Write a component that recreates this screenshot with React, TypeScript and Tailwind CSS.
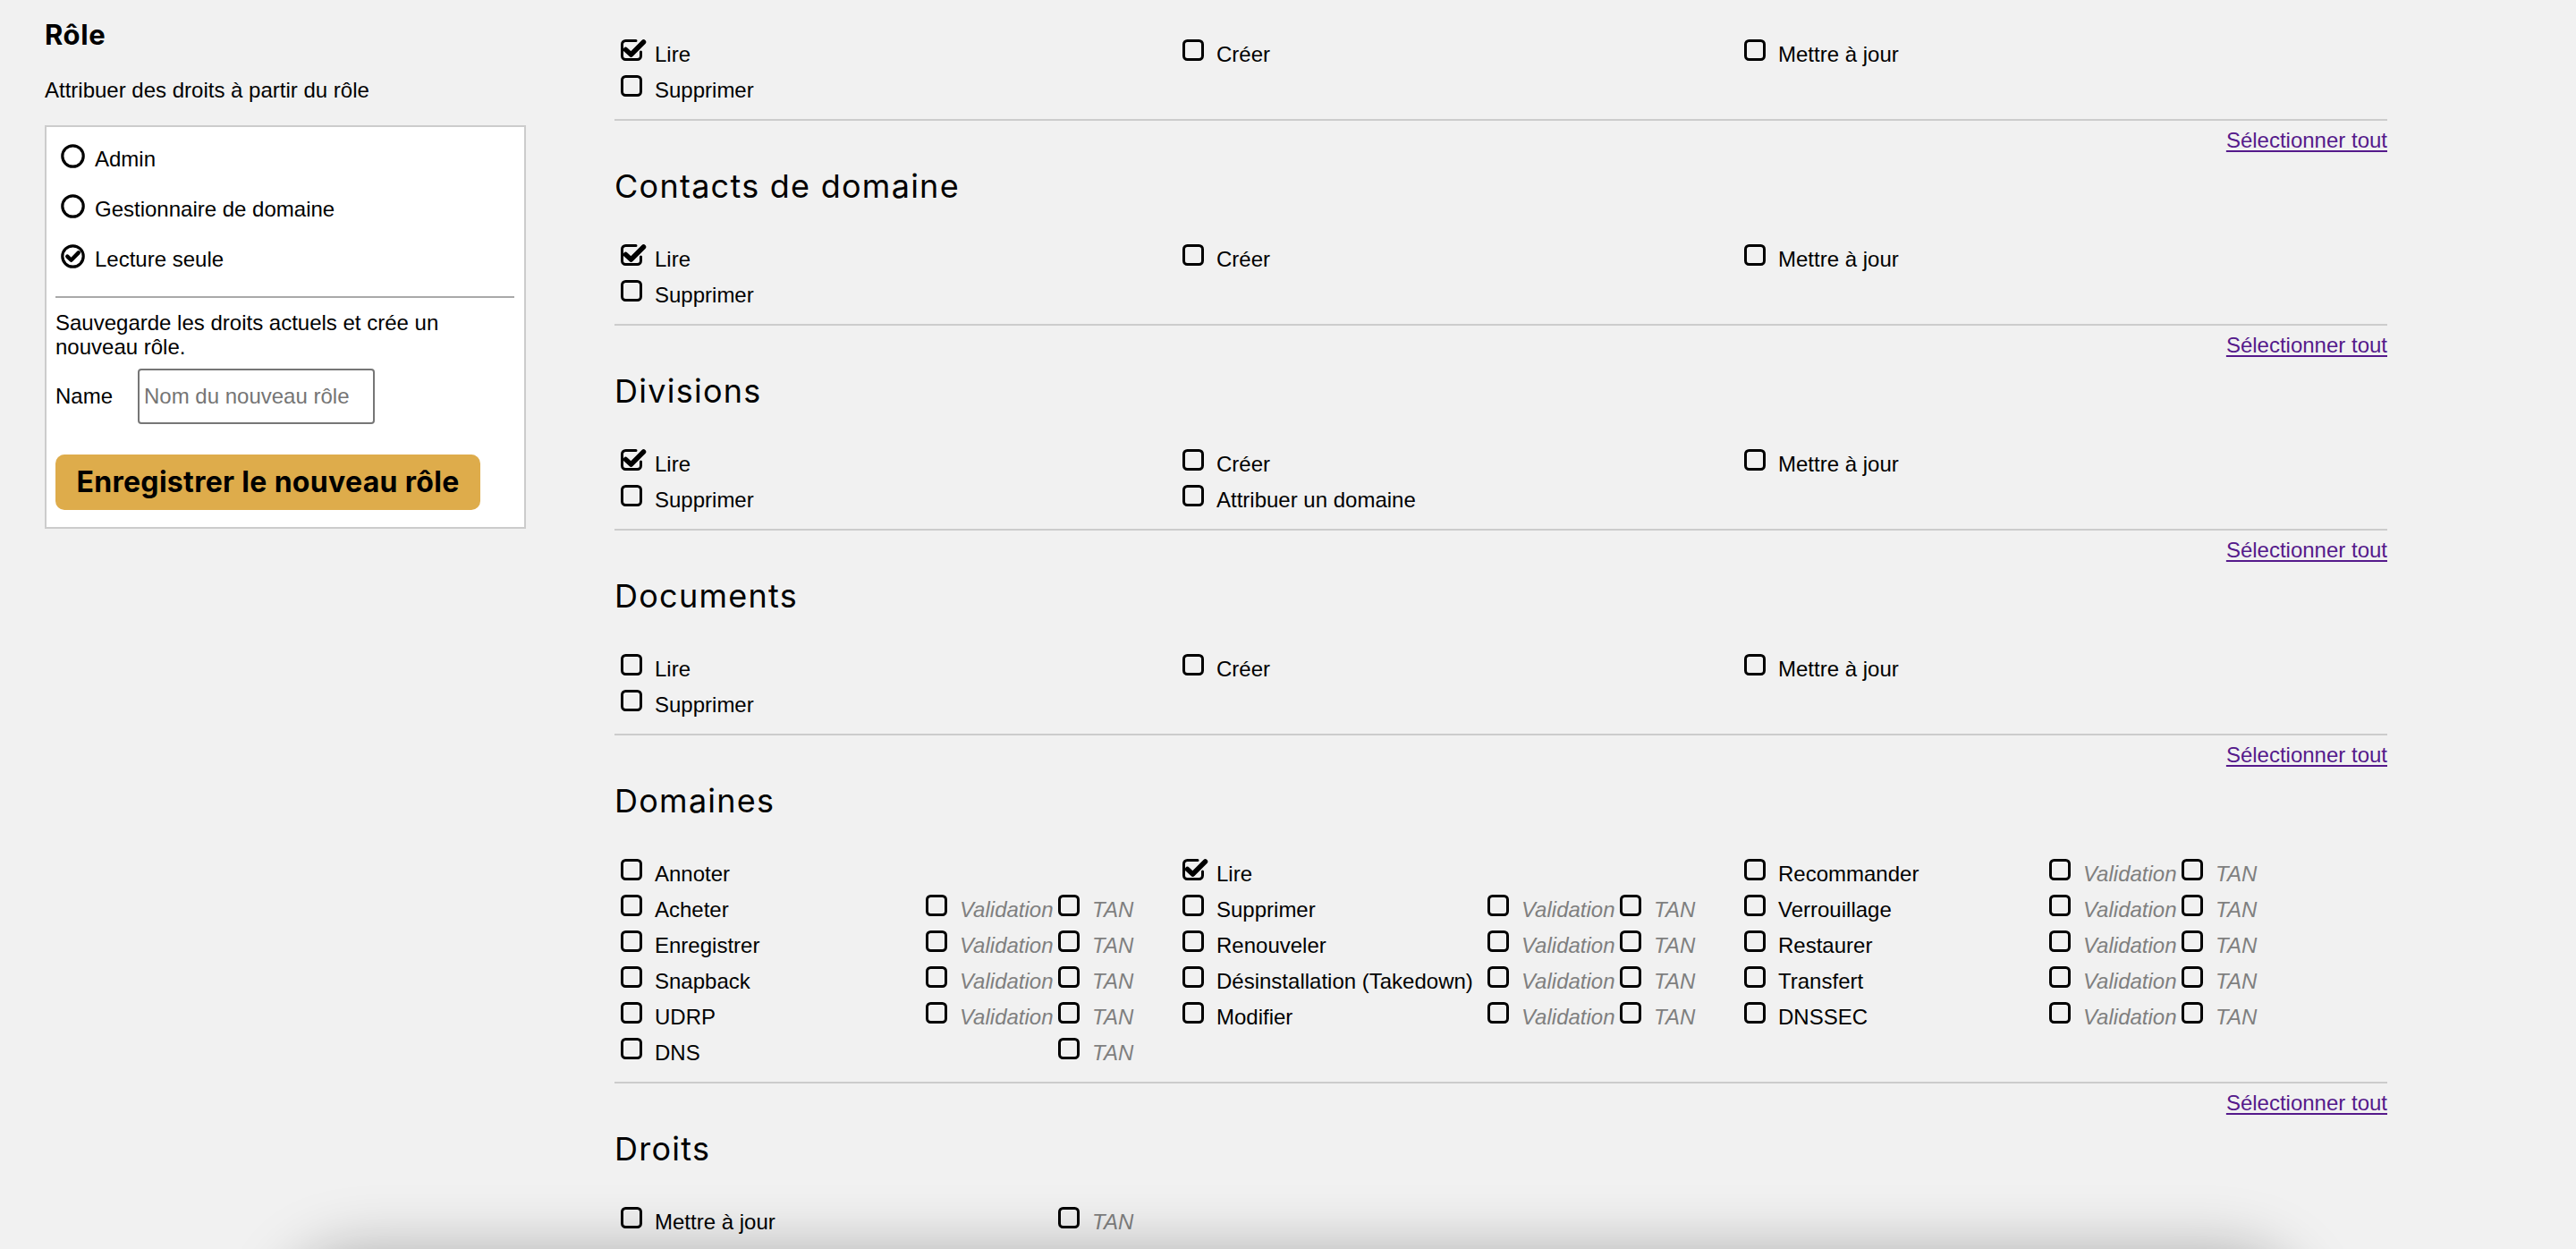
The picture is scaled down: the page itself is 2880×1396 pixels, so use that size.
import React from "react";

type Perm = { label: string; checked?: boolean; validation?: boolean; tan?: boolean };

const sections: { title?: string; items: Perm[] }[] = [
  {
    items: [
      { label: "Lire", checked: true },
      { label: "Créer" },
      { label: "Mettre à jour" },
      { label: "Supprimer" },
    ],
  },
  {
    title: "Contacts de domaine",
    items: [
      { label: "Lire", checked: true },
      { label: "Créer" },
      { label: "Mettre à jour" },
      { label: "Supprimer" },
    ],
  },
  {
    title: "Divisions",
    items: [
      { label: "Lire", checked: true },
      { label: "Créer" },
      { label: "Mettre à jour" },
      { label: "Supprimer" },
      { label: "Attribuer un domaine" },
    ],
  },
  {
    title: "Documents",
    items: [
      { label: "Lire" },
      { label: "Créer" },
      { label: "Mettre à jour" },
      { label: "Supprimer" },
    ],
  },
  {
    title: "Domaines",
    items: [
      { label: "Annoter" },
      { label: "Lire", checked: true },
      { label: "Recommander", validation: true, tan: true },
      { label: "Acheter", validation: true, tan: true },
      { label: "Supprimer", validation: true, tan: true },
      { label: "Verrouillage", validation: true, tan: true },
      { label: "Enregistrer", validation: true, tan: true },
      { label: "Renouveler", validation: true, tan: true },
      { label: "Restaurer", validation: true, tan: true },
      { label: "Snapback", validation: true, tan: true },
      { label: "Désinstallation (Takedown)", validation: true, tan: true },
      { label: "Transfert", validation: true, tan: true },
      { label: "UDRP", validation: true, tan: true },
      { label: "Modifier", validation: true, tan: true },
      { label: "DNSSEC", validation: true, tan: true },
      { label: "DNS", tan: true },
    ],
  },
  {
    title: "Droits",
    items: [{ label: "Mettre à jour", tan: true }],
  },
];

function CheckBox({ checked }: { checked?: boolean }) {
  return (
    <svg width="24" height="24" viewBox="0 0 24 24" overflow="visible" className="mt-[3px] shrink-0">
      {checked ? (
        <>
          <path
            d="M17 1.5 H5.5 a4 4 0 0 0 -4 4 V18.5 a4 4 0 0 0 4 4 H18.5 a4 4 0 0 0 4 -4 V14"
            fill="none"
            stroke="#000"
            strokeWidth="3"
            strokeLinecap="round"
          />
          <path d="M5.5 11.5 L11.5 17 L25.5 3" fill="none" stroke="#000" strokeWidth="5.5" strokeLinejoin="round" strokeLinecap="round" />
        </>
      ) : (
        <rect x="1.5" y="1.5" width="21" height="21" rx="4" fill="none" stroke="#000" strokeWidth="3" />
      )}
    </svg>
  );
}

function Radio({ checked }: { checked?: boolean }) {
  return (
    <svg width="27" height="27" viewBox="0 0 27 27" className="-mt-[8px] shrink-0">
      <circle cx="13.5" cy="13.5" r="11.7" fill="none" stroke="#000" strokeWidth="3.2" />
      {checked && (
        <path d="M7.3 13.6 L11.6 17.8 L19.8 9.4" fill="none" stroke="#000" strokeWidth="4.4" strokeLinecap="round" strokeLinejoin="round" />
      )}
    </svg>
  );
}

function PermItem({ p }: { p: Perm }) {
  return (
    <div className="flex w-[628px] h-[40px]">
      <div className="flex w-[341px] gap-[14px]">
        <CheckBox checked={p.checked} />
        <span className="leading-[40px] whitespace-nowrap">{p.label}</span>
      </div>
      <div className="flex w-[148px] gap-[14px]">
        {p.validation && (
          <>
            <CheckBox />
            <span className="leading-[40px] italic text-[#7f7f7f]">Validation</span>
          </>
        )}
      </div>
      <div className="flex w-[139px] gap-[14px]">
        {p.tan && (
          <>
            <CheckBox />
            <span className="leading-[40px] italic text-[#7f7f7f]">TAN</span>
          </>
        )}
      </div>
    </div>
  );
}

function Section({ title, items, last }: { title?: string; items: Perm[]; last?: boolean }) {
  return (
    <section>
      {title && (
        <h2 className="mt-[7px] h-[48px] leading-[48px] text-[36px] font-['Inter',sans-serif] font-normal text-black tracking-[0.035em]">
          {title}
        </h2>
      )}
      <div className={`${title ? "mt-[38px]" : ""} grid grid-cols-[repeat(3,628px)] pl-[7px]`}>
        {items.map((p, i) => (
          <PermItem key={i} p={p} />
        ))}
      </div>
      {!last && (
        <>
          <hr className="mt-[12px] border-0 h-[2px] bg-[#cccccc]" />
          <div className="mt-[2px] text-right leading-[40px]">
            <a href="#" className="text-[#551a8b] underline underline-offset-[3px]">
              Sélectionner tout
            </a>
          </div>
        </>
      )}
    </section>
  );
}

export default function App() {
  return (
    <div className="relative h-[1396px] overflow-hidden bg-[#f1f1f1] text-black text-[24px] font-['Liberation_Sans',Arial,sans-serif]">
      <div className="flex">
        {/* Role sidebar */}
        <aside className="ml-[50px] w-[538px] shrink-0 pt-[21px]">
          <h1 className="h-[36px] leading-[36px] text-[31px] font-bold font-['Inter',sans-serif] tracking-[0.02em]">Rôle</h1>
          <p className="mt-[28px] leading-[32px]">Attribuer des droits à partir du rôle</p>
          <div className="mt-[23px] border-2 border-[#cccccc] bg-white pt-[8px] pb-[19px] pl-[10px] pr-[11px]">
            {[
              { label: "Admin" },
              { label: "Gestionnaire de domaine" },
              { label: "Lecture seule", checked: true },
            ].map((r) => (
              <div key={r.label} className="flex items-center h-[56px] pl-[6px] gap-[11px]">
                <Radio checked={r.checked} />
                <span className="leading-[56px]">{r.label}</span>
              </div>
            ))}
            <hr className="mt-[13px] border-0 h-[2px] bg-[#a9a9a9]" />
            <p className="mt-[14px] leading-[27px]">Sauvegarde les droits actuels et crée un nouveau rôle.</p>
            <div className="mt-[11px] flex items-center">
              <label className="w-[92px]">Name</label>
              <input
                placeholder="Nom du nouveau rôle"
                className="w-[265px] h-[62px] border-2 border-[#767676] rounded-[4px] bg-white px-[5px] text-[24px] placeholder:text-[#757575] outline-none"
              />
            </div>
            <button className="mt-[34px] w-[475px] h-[62px] rounded-[10px] bg-[#deac4b] text-[32px] font-bold font-['Inter',sans-serif] tracking-[0.01em] text-black">
              Enregistrer le nouveau rôle
            </button>
          </div>
        </aside>

        {/* Permissions */}
        <main className="ml-[99px] w-[1982px] pt-[41px]">
          {sections.map((s, i) => (
            <Section key={i} title={s.title} items={s.items} last={i === sections.length - 1} />
          ))}
        </main>
      </div>

      {/* shadow of the panel below the fold */}
      <div className="absolute left-[330px] right-[320px] top-[1412px] h-[200px] rounded-[70px] bg-[#f1f1f1] shadow-[0_0_70px_14px_rgba(0,0,0,0.28)]" />
    </div>
  );
}
